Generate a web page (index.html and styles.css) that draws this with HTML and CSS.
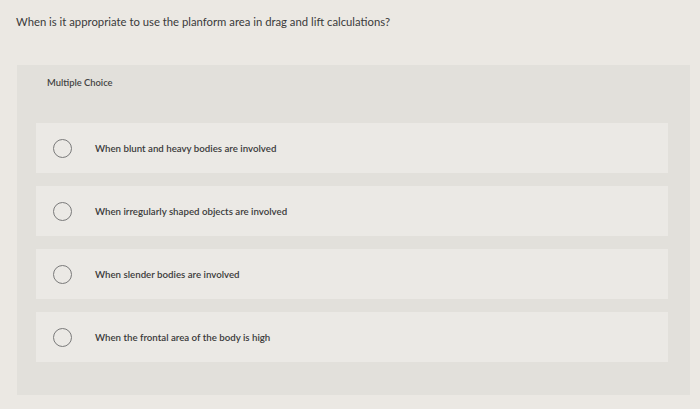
FILE: index.html
```
<!DOCTYPE html>
<html>
<head>
<meta charset="utf-8">
<link rel="stylesheet" href="styles.css">
</head>
<body>
<div class="page">
  <p class="question">When is it appropriate to use the planform area in drag and lift calculations?</p>
  <div class="panel">
    <div class="label">Multiple Choice</div>
    <div class="options">
      <div class="option"><span class="radio"></span><span class="text">When blunt and heavy bodies are involved</span></div>
      <div class="option"><span class="radio"></span><span class="text">When irregularly shaped objects are involved</span></div>
      <div class="option"><span class="radio"></span><span class="text">When slender bodies are involved</span></div>
      <div class="option"><span class="radio"></span><span class="text">When the frontal area of the body is high</span></div>
    </div>
  </div>
</div>
</body>
</html>
```
FILE: styles.css
```
html, body {
  margin: 0;
  padding: 0;
  background: #ebe8e3;
  font-family: Lato, "Liberation Sans", sans-serif;
  color: #3b3a3a;
}
.page {
  width: 700px;
  height: 409px;
  overflow: hidden;
  padding-top: 14px;
  box-sizing: border-box;
}
.question {
  margin: 0 0 0 16px;
  font-size: 11.3px;
  line-height: 16px;
  color: #3a3a3a;
}
.panel {
  margin: 35px 10px 0 17px;
  background: #e2e0db;
  height: 330px;
  padding: 11px 0 0 0;
  box-sizing: border-box;
}
.label {
  padding-left: 30px;
  font-size: 9.4px;
  line-height: 14px;
  font-weight: 600;
  color: #444;
}
.options {
  margin-top: 33px;
  display: flex;
  flex-direction: column;
  gap: 13px;
  padding-left: 19px;
  padding-right: 22px;
}
.option {
  height: 50px;
  background: #ebe9e5;
  display: flex;
  align-items: center;
}
.radio {
  width: 19px;
  height: 19px;
  border: 1.3px solid #7a7a7a;
  border-radius: 50%;
  box-sizing: border-box;
  margin-left: 17px;
  flex: none;
}
.text {
  margin-left: 23px;
  font-size: 9.7px;
  font-weight: 600;
  color: #3a3a3a;
}
```
